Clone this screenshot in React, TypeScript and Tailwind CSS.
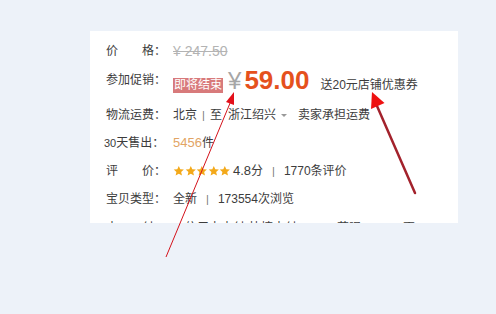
import React from "react";

const font = { fontFamily: '"Liberation Sans", "Noto Sans CJK SC", sans-serif' };

function Label({ text, spread }: { text: string; spread?: boolean }) {
  if (spread) {
    return (
      <div className="flex w-[69px] shrink-0 whitespace-nowrap pl-[2px]">
        <span>{text[0]}</span>
        <span className="ml-[24px]">{text.slice(1)}：</span>
      </div>
    );
  }
  return <div className="w-[69px] shrink-0 whitespace-nowrap pl-[2px]">{text}：</div>;
}

function Sep() {
  return <span className="mx-[9px] text-[11px] text-[#777]">|</span>;
}

function Star() {
  return (
    <svg width="11.6" height="12" viewBox="0 0 24 24" className="shrink-0">
      <path
        d="M12 1.5l3.1 6.9 7.4.7-5.6 5 1.7 7.4L12 17.7l-6.6 3.8 1.7-7.4-5.6-5 7.4-.7z"
        fill="#f3a91a"
      />
    </svg>
  );
}

export default function App() {
  return (
    <div className="relative h-[314px] w-[496px] overflow-hidden bg-[#edf2f9]" style={font}>
      <div className="pt-[31px] pl-[90px]">
        <div className="h-[192px] w-[368px] overflow-hidden bg-white pt-[6px] pl-[14px] text-[12px] text-[#3c3c3c]">
          <div className="flex h-[28px] items-center">
            <Label text="价格" spread />
            <div className="text-[14px] text-[#b3b3b3] line-through">¥ 247.50</div>
          </div>

          <div className="flex h-[30px] items-center">
            <Label text="参加促销" />
            <div className="flex items-baseline whitespace-nowrap pt-[1px]">
              <span className="bg-[#d87a7b] px-[1px] text-[12px] leading-[15px] text-white">即将结束</span>
              <span className="ml-[5px] text-[24px] leading-none text-[#a6a6a6]">¥</span>
              <span className="ml-[3px] text-[26px] font-bold leading-none text-[#e5511d]">59.00</span>
              <span className="ml-[11px] text-[12px] text-[#3c3c3c]">送20元店铺优惠券</span>
            </div>
          </div>

          <div className="mt-[6px] flex h-[28px] items-center">
            <Label text="物流运费" />
            <div className="flex items-center whitespace-nowrap">
              <span>北京</span>
              <span className="mx-[5px] text-[11px] text-[#777]">|</span>
              <span>至</span>
              <span className="ml-[6px]">浙江绍兴</span>
              <svg width="6" height="4" viewBox="0 0 6 4" className="ml-[5px] mt-[2px]">
                <path d="M0 0h6L3 3z" fill="#999" />
              </svg>
              <span className="ml-[11px]">卖家承担运费</span>
            </div>
          </div>

          <div className="flex h-[28px] items-center">
            <div className="-ml-[2px] w-[71px] shrink-0 whitespace-nowrap pl-[2px]">
              <span className="text-[11px]">30</span>天售出：
            </div>
            <div className="whitespace-nowrap">
              <span className="text-[13px] text-[#e2a464]">5456</span>
              <span>件</span>
            </div>
          </div>

          <div className="flex h-[28px] items-center">
            <Label text="评价" spread />
            <div className="flex items-center whitespace-nowrap">
              <Star />
              <Star />
              <Star />
              <Star />
              <Star />
              <span className="ml-[2px]">
                <span className="text-[13px]">4.8</span>分
              </span>
              <Sep />
              <span>1770条评价</span>
            </div>
          </div>

          <div className="flex h-[28px] items-center">
            <Label text="宝贝类型" />
            <div className="flex items-center whitespace-nowrap">
              <span>全新</span>
              <Sep />
              <span>173554次浏览</span>
            </div>
          </div>

          <div className="flex h-[28px] items-center pt-[2px]">
            <Label text="支付" spread />
            <div className="flex items-center whitespace-nowrap">
              <span className="ml-[12px]">信用卡支付</span>
              <span className="ml-[4px]">快捷支付</span>
              <span className="ml-[40px]">花呗</span>
              <span className="ml-[14px] h-[10px] w-[8px] bg-[#c0272d]" />
              <span className="ml-[20px]">更</span>
            </div>
          </div>
        </div>
      </div>

      <svg className="pointer-events-none absolute inset-0" width="496" height="314" viewBox="0 0 496 314">
        <line x1="166" y1="257" x2="230.5" y2="102" stroke="#d4121b" strokeWidth="1" />
        <polygon points="234,92 234,105 226,102" fill="#e3101a" />
        <line x1="415" y1="193" x2="377" y2="106" stroke="#a3222c" strokeWidth="2.5" strokeLinecap="round" />
        <polygon points="372,92 384.5,103 371,109" fill="#ee1111" />
      </svg>
    </div>
  );
}
